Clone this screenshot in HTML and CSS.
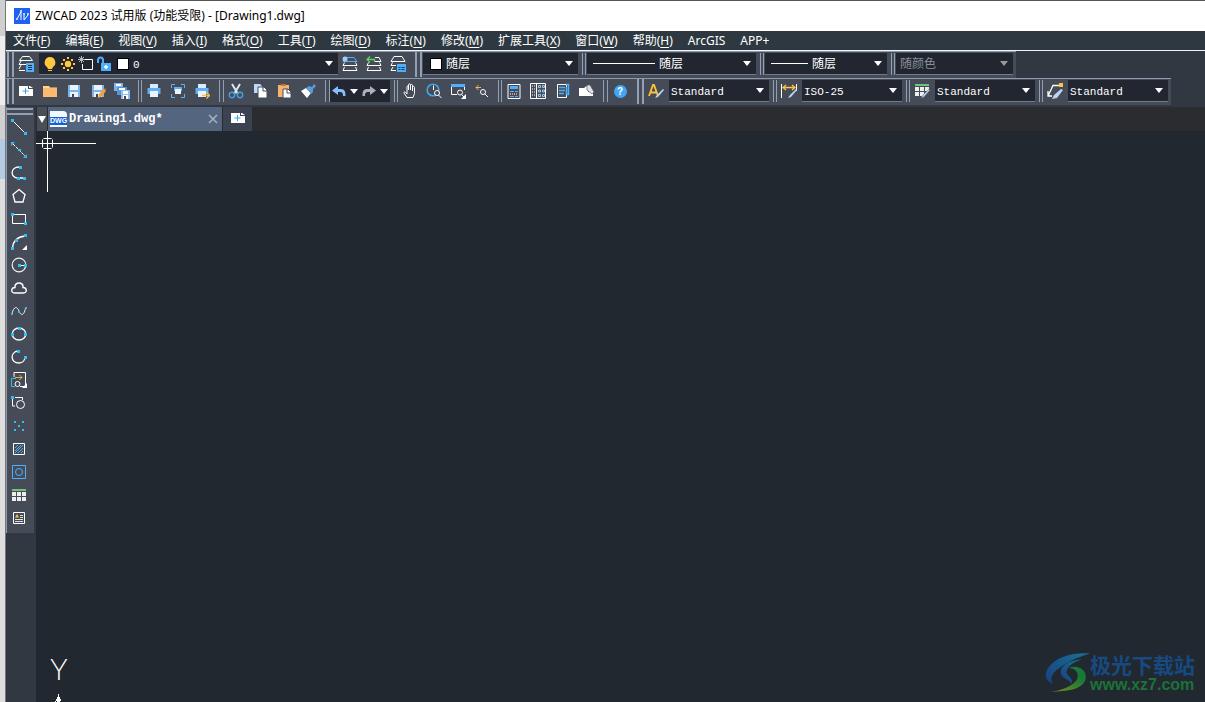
FILE: index.html
```html
<!DOCTYPE html>
<html lang="zh-CN">
<head>
<meta charset="utf-8">
<title>ZWCAD 2023</title>
<link rel="stylesheet" href="styles.css">
</head>
<body>
<svg class="sprite" aria-hidden="true">
  <symbol id="layers" viewBox="0 0 16 16"><path d="M4.500 .5h7l3 4h-13zM3 5l-2 3.500h7M3 9l-2 4M1 14.500h6" fill="none" stroke="#fff"/><path d="M8 7h8v9H8z" fill="#4cb0ff"/><path d="M10 9.500h4M10 11.500h4M10 13.500h4" stroke="#233"/></symbol>
  <symbol id="layer-current" viewBox="0 0 16 16"><path d="M4 1.500h8l3 4H1z" fill="none" stroke="#4cb0ff"/><path d="M2.500 6.500l-1.500 3h14l-1.500-3M2.500 11l-1.500 3.500h14L13.500 11" fill="none" stroke="#fff"/><circle cx="3" cy="3" r="2.500" fill="#a9c9ef"/></symbol>
  <symbol id="layer-prev" viewBox="0 0 16 16"><path d="M9 1.500h4l2 4H9M2.500 6.500l-1.500 3h14l-1.500-3M2.500 11l-1.500 3.500h14L13.500 11" fill="none" stroke="#fff"/><path d="M8.500 6V3.500H1M4 .5l-3 3 3 3" fill="none" stroke="#5fd06a" stroke-width="1.300"/></symbol>
  <symbol id="layer-state" viewBox="0 0 16 16"><path d="M4 .5h8l3 5H1zM2.500 6.500l-1.500 3h5M3 11l-2 3.500h5" fill="none" stroke="#fff"/><path d="M7 8h9v8H7z" fill="#4cb0ff"/><path d="M8.500 11.500h2M11.500 11.500h3M8.500 13.500h2M11.500 13.500h3" stroke="#234"/></symbol>
  <symbol id="bulb" viewBox="0 0 16 16"><path d="M8 1a5.500 5.500 0 0 0-3 10l1 2h4l1-2A5.500 5.500 0 0 0 8 1zM6 14h4v1H6z" fill="#ffc83d"/></symbol>
  <symbol id="sun" viewBox="0 0 16 16"><circle cx="8" cy="8" r="3.200" fill="#ffc83d"/><path d="M7 1h2v2H7zM7 13h2v2H7zM1 7h2v2H1zM13 7h2v2h-2zM3 3h2v2H3zM11 3h2v2h-2zM3 11h2v2H3zM11 11h2v2h-2z" fill="#ffc83d"/></symbol>
  <symbol id="freeze" viewBox="0 0 16 16"><path d="M7 3.500h7.500v10h-10V8" fill="none" stroke="#fff"/><path d="M3.500 0v7M0 3.500h7M1 1l5 5M6 1L1 6" stroke="#bbb"/></symbol>
  <symbol id="unlock" viewBox="0 0 16 16"><path d="M2 7V4a2.500 2.500 0 0 1 5 0v4" fill="none" stroke="#4cb0ff" stroke-width="2"/><path d="M5 7h10v8H5z" fill="#4cb0ff"/><path d="M10 9v4M8 11h4" stroke="#fff" stroke-width="1.500"/></symbol>
  <symbol id="new" viewBox="0 0 16 16"><path d="M1 3h9v3h5v7H1zM11 3h1l3 2h-4z" fill="#fff"/><path d="M7.500 5v6M4.500 8h6" stroke="#3fa3ec"/></symbol>
  <symbol id="open" viewBox="0 0 16 16"><path d="M1 3h6l1 1.500h7V7H1z" fill="#ffd984"/><path d="M1 5h14v9H1z" fill="#fbb972"/></symbol>
  <symbol id="save" viewBox="0 0 16 16"><path d="M2 2h12v12H2z" fill="#7eb4ea"/><path d="M4 2h8v5H4zM4 9h8v5H4z" fill="#e9f3fd"/><path d="M6 11h2v3H6z" fill="#37485d"/></symbol>
  <symbol id="saveas" viewBox="0 0 16 16"><use href="#save"/><path d="M8 15l1-4 5-5 2 2-5 6z" fill="#f4a52f"/><path d="M14 6l1-1 2 2-1 1z" fill="#f25d3b"/></symbol>
  <symbol id="saveall" viewBox="0 0 16 16"><path d="M0 0h9v8H0z" fill="#7eb4ea"/><path d="M2 1h5v2H2z" fill="#fff"/><path d="M3 4h10v8H3z" fill="#5795d4"/><path d="M5 5h6v2H5z" fill="#fff"/><path d="M7 7h9v9H7z" fill="#8dc0f2"/><path d="M9 8h5v3H9zM9 12h5v4H9z" fill="#fff"/><path d="M10 13h2v3h-2z" fill="#37485d"/></symbol>
  <symbol id="print" viewBox="0 0 16 16"><path d="M4 1h8v4H4z" fill="#d9ecff"/><path d="M1.500 5h13v6h-13z" fill="#64aef5"/><path d="M4 8h8v6H4z" fill="#eaf4ff"/></symbol>
  <symbol id="preview" viewBox="0 0 16 16"><path d="M1.500 5V1.500H5M11 1.500h3.500V5M14.500 11v3.500H11M5 14.500H1.500V11" fill="none" stroke="#64aef5"/><path d="M4 4h8v4H4z" fill="#64aef5"/><path d="M5 6h6v5H5z" fill="#eaf4ff"/></symbol>
  <symbol id="publish" viewBox="0 0 16 16"><use href="#print"/><path d="M8 12.500h7M12.500 9.500l3 3-3 3" fill="none" stroke="#f3c04b" stroke-width="1.300"/></symbol>
  <symbol id="cut" viewBox="0 0 16 16"><path d="M4 1l6 10M12 1L6 11" stroke="#dfe5ec" stroke-width="2"/><circle cx="4" cy="12" r="2.700" fill="none" stroke="#44a0e3" stroke-width="1.400"/><circle cx="12" cy="12" r="2.700" fill="none" stroke="#44a0e3" stroke-width="1.400"/></symbol>
  <symbol id="copy" viewBox="0 0 16 16"><path d="M2 1h6l2 2v7H2z" fill="#bdd9f6"/><path d="M6 4h6l3 3v8H6z" fill="#fff" stroke="#454c57"/><path d="M11 4v4h4" fill="none" stroke="#454c57"/></symbol>
  <symbol id="paste" viewBox="0 0 16 16"><path d="M2 2h11v12H2z" fill="#f7b46b"/><path d="M5 1h5v2H5z" fill="#b5793d"/><path d="M7 6h5l3 3v6H7z" fill="#fff" stroke="#454c57"/><path d="M11 6v4h4" fill="none" stroke="#454c57"/></symbol>
  <symbol id="brush" viewBox="0 0 16 16"><path d="M1 8l5-3 5 5-4 5z" fill="#fff"/><path d="M6 5l3-2 3 1 2-3 2 2-3 3v3l-2 2z" fill="#5a9bdd"/></symbol>
  <symbol id="undo" viewBox="0 0 16 16"><path d="M7 3v3h3c4 0 4.500 3 4.500 7h-2.500c0-3-.5-4-3-4H7v3L1 7.500z" fill="#86bdff"/></symbol>
  <symbol id="redo" viewBox="0 0 16 16"><path d="M9 3v3H6c-4 0-4.500 3-4.500 7H4c0-3 .5-4 3-4h2v3l6-4.500z" fill="#aeb2b8"/></symbol>
  <symbol id="pan" viewBox="0 0 16 16"><path d="M5 14.500L2 10c-.5-1 1-1.500 1.500-.5L5 11V4c0-1.500 1.500-1.500 1.500 0v3-5c0-1.500 2-1.500 2 0v5-4.500c0-1.500 2-1.500 2 0V8 4.500c0-1.500 2-1.500 2 0v6l-1.500 4z" fill="none" stroke="#fff"/></symbol>
  <symbol id="zoom-rt" viewBox="0 0 16 16"><circle cx="7" cy="7" r="5.800" fill="none" stroke="#44a5ee" stroke-width="1.600"/><path d="M7.500 2.500V7M12.500 12l3 3" stroke="#fff"/><circle cx="11" cy="10" r="2.500" fill="#454c57" stroke="#fff"/></symbol>
  <symbol id="zoom-win" viewBox="0 0 16 16"><path d="M1 1h14v3H1z" fill="#4cb0ff"/><path d="M1.500 4v7.500H7M14.500 4v3M12 12l2 2" fill="none" stroke="#fff"/><circle cx="10" cy="9.500" r="2.500" fill="none" stroke="#fff"/><path d="M16 11v5h-5z" fill="#fff"/></symbol>
  <symbol id="zoom-prev" viewBox="0 0 16 16"><path d="M2 4.500h5M4.500 2L2 4.500 4.500 7" fill="none" stroke="#efb954"/><circle cx="9" cy="9" r="2.500" fill="none" stroke="#fff"/><path d="M11 11l3 3" stroke="#fff"/></symbol>
  <symbol id="props" viewBox="0 0 16 16"><path d="M2 1.500h12v14H2z" fill="none" stroke="#fff"/><path d="M4 3h8v3H4z" fill="#4cb0ff"/><path d="M4 8.500h8M4 13.500h8" stroke="#4cb0ff" stroke-dasharray="4 1"/><path d="M4 11h8" stroke="#fff" stroke-dasharray="1 1"/></symbol>
  <symbol id="design" viewBox="0 0 16 16"><path d="M.5.5h15v15H.5zM6.500.5v15" fill="none" stroke="#fff"/><path d="M2 3h3M2 6h3M2 9h3M2 12h3" stroke="#fff" stroke-dasharray="1 1"/><path d="M8.500 2.500h2v2h-2zM12.500 2.500h2v2h-2zM8.500 7h2v2h-2zM12.500 7h2v2h-2zM8.500 11.500h2v2h-2zM12.500 11.500h2v2h-2z" fill="none" stroke="#9fc8ee"/></symbol>
  <symbol id="palette" viewBox="0 0 16 16"><path d="M3.500 1.500h9v13h-9z" fill="none" stroke="#fff"/><path d="M5 4.500h6M5 7.500h6M5 10.500h5M12 1.500h2.500v10h-2V4" stroke="#4cb0ff" stroke-width="1.500" fill="none"/></symbol>
  <symbol id="markup" viewBox="0 0 16 16"><path d="M1 5h5l4-3v7h5v4H1z" fill="#fff"/><path d="M9 2h3l4 7-2 2-5-4z" fill="#dfe3e8" stroke="#565e69" stroke-width=".7"/></symbol>
  <symbol id="textstyle" viewBox="0 0 16 16"><path d="M1 13L5 2h1l4 11M3 9.500h5" fill="none" stroke="#ffc43a" stroke-width="1.800"/><path d="M7 15l2-3 6-6 1 1-6 7z" fill="#b9d5f2"/></symbol>
  <symbol id="dimstyle" viewBox="0 0 16 16"><path d="M.5 1v14M15.500 1v7" stroke="#fff"/><path d="M2 4.500h12M5 2L2 4.500 5 7M11 2l3 2.500L11 7" fill="none" stroke="#ffc43a" stroke-width="1.300"/><path d="M7 15l2-3 6-6 1 1-6 7z" fill="#b9d5f2"/></symbol>
  <symbol id="tablestyle" viewBox="0 0 16 16"><path d="M1 1h14v2H1z" fill="#73c27c"/><path d="M1 4h4v4H1zM6 4h4v4H6zM11 4h4v4h-4zM1 9h4v4H1zM6 9h4v4H6z" fill="#eee"/><path d="M7 15l2-3 6-6 1 1-6 7z" fill="#b9d5f2" stroke="#5c6878" stroke-width=".5"/></symbol>
  <symbol id="leaderstyle" viewBox="0 0 16 16"><path d="M12 2.500H6L1.500 12M1 8v5h4" fill="none" stroke="#fff" stroke-width="1.300"/><path d="M12 0h4v4h-4z" fill="#ffc43a"/><path d="M5 16l2-4 7-6 2 1-6 8z" fill="#b9d5f2"/></symbol>
  <symbol id="line" viewBox="0 0 16 16"><path d="M2 2l12 12" stroke="#fff"/><path d="M0 0h3v3H0zM13 13h3v3h-3z" fill="#33bdf7"/></symbol>
  <symbol id="xline" viewBox="0 0 16 16"><path d="M2 2l12 12" stroke="#fff" stroke-dasharray="3 1"/><path d="M0 0h4L0 4zM16 16h-4l4-4zM7 7h3v2H7z" fill="#33bdf7"/></symbol>
  <symbol id="pline" viewBox="0 0 16 16"><path d="M8 2C-1 2-1 13 7 13h6" fill="none" stroke="#fff" stroke-width="1.300"/><path d="M8 1h3v3H8zM6 12h3v3H6zM12 12h3v3h-3z" fill="#33bdf7"/></symbol>
  <symbol id="polygon" viewBox="0 0 16 16"><path d="M8 1.500l6 5L12 14H4L2 6.500z" fill="none" stroke="#fff" stroke-width="1.300"/></symbol>
  <symbol id="rect" viewBox="0 0 16 16"><path d="M1.500 3.500h13v9h-13z" fill="none" stroke="#fff"/><path d="M0 2h3v3H0zM13 11h3v3h-3z" fill="#33bdf7"/></symbol>
  <symbol id="arc" viewBox="0 0 16 16"><path d="M1.500 14C2 7 6 3 14 2" fill="none" stroke="#fff" stroke-width="1.300"/><path d="M0 13h3v3H0zM4 5h3v3H4zM13 0h3v3h-3z" fill="#33bdf7"/><path d="M16 11v5h-5z" fill="#fff"/></symbol>
  <symbol id="circle" viewBox="0 0 16 16"><circle cx="8" cy="8" r="6.800" fill="none" stroke="#eee" stroke-width="1.200"/><path d="M8 8.500h7" stroke="#fff"/><path d="M7 7h3v3H7zM13 7h3v3h-3z" fill="#33bdf7"/></symbol>
  <symbol id="cloud" viewBox="0 0 16 16"><path d="M3.500 13C-.5 13 0 7.500 4 7.500 3 1.500 13 1.500 12 7.500c4 0 4.500 5.500.5 5.500z" fill="none" stroke="#fff" stroke-width="1.400"/></symbol>
  <symbol id="spline" viewBox="0 0 16 16"><path d="M1 10.500C3 3 6 3 8 8s5 5 6.500-3" fill="none" stroke="#eee"/><path d="M0 10h2v2H0zM7 8h2v2H7zM14 4h2v2h-2z" fill="#33bdf7"/></symbol>
  <symbol id="ellipse" viewBox="0 0 16 16"><ellipse cx="8" cy="8" rx="6.800" ry="6" fill="none" stroke="#fff" stroke-width="1.300"/><path d="M7 1h3v3H7zM0 7h3v3H0zM13 7h3v3h-3z" fill="#33bdf7"/></symbol>
  <symbol id="ellarc" viewBox="0 0 16 16"><path d="M7 2C-1 3-1 14 8 14c4 0 6-3 6-6" fill="none" stroke="#fff" stroke-width="1.300"/><path d="M6 1h3v3H6zM13 7h3v3h-3z" fill="#33bdf7"/></symbol>
  <symbol id="insert" viewBox="0 0 16 16"><path d="M3 5V.5h11.500v14H9" fill="none" stroke="#fff"/><path d="M5 6.500H.5v8H4" fill="none" stroke="#33bdf7"/><path d="M4 5.500h7M8.500 3L11 5.500 8.500 8" fill="none" stroke="#efaf3e"/><circle cx="6.500" cy="12" r="2.500" fill="none" stroke="#fff"/><path d="M16 11v5h-5z" fill="#fff"/></symbol>
  <symbol id="block" viewBox="0 0 16 16"><path d="M1.500 3v8H4M4 2.500h7.500V5" fill="none" stroke="#fff"/><path d="M0 1h3v3H0z" fill="#33bdf7"/><circle cx="9.500" cy="9.500" r="4" fill="none" stroke="#fff"/></symbol>
  <symbol id="points" viewBox="0 0 16 16"><path d="M3 3h2v2H3zM11 3h2v2h-2zM7 7h2v2H7zM3 11h2v2H3zM11 11h2v2h-2z" fill="#33bdf7"/></symbol>
  <symbol id="hatch" viewBox="0 0 16 16"><path d="M2.500 2.500h11v11h-11z" fill="none" stroke="#fff"/><path d="M4 7l3-3M4 10l6-6M4 12l8-8M7 12l5-5M10 12l2-2" stroke="#4cb0ff"/></symbol>
  <symbol id="region" viewBox="0 0 16 16"><path d="M1.500 1.500h13v13h-13z" fill="none" stroke="#4cb0ff"/><circle cx="8" cy="8" r="3.500" fill="none" stroke="#4cb0ff"/></symbol>
  <symbol id="table" viewBox="0 0 16 16"><path d="M1 2h14v2H1z" fill="#73c27c"/><path d="M1 5h4v4H1zM6 5h4v4H6zM11 5h4v4h-4zM1 10h4v4H1zM6 10h4v4H6zM11 10h4v4h-4z" fill="#eee"/></symbol>
  <symbol id="mtext" viewBox="0 0 16 16"><path d="M2.500 2.500h11v11h-11z" fill="none" stroke="#fff"/><path d="M4 7.500L6 4l2 3.500z" fill="#ffc43a"/><path d="M9 5.500h3M9 7.500h3M4 9.500h8M4 11.500h8" stroke="#ddd"/></symbol>
</svg>

<div class="desktop">
  <div class="behind"><i class="behind-title"></i><i class="behind-bar"></i><i class="behind-row"></i><i class="behind-selected"></i></div>
  <div class="window">
    <header class="titlebar">
      <svg class="logo" viewBox="0 0 16 16" aria-hidden="true"><path d="M0 0h16v16H0z" fill="#1f61f0"/><path d="M3 11L7 4v8M10 6v6l4-5" fill="none" stroke="#fff"/><path d="M2 10h2v2H2zM6 2h2v2H6zM9 5h2v2H9zM13 5h2v2h-2z" fill="#b9d1ff"/></svg>
      <h1>ZWCAD 2023 试用版 (功能受限) - [Drawing1.dwg]</h1>
    </header>
    <nav class="menubar">
      <button>文件(<u>F</u>)</button><button>编辑(<u>E</u>)</button><button>视图(<u>V</u>)</button><button>插入(<u>I</u>)</button><button>格式(<u>O</u>)</button><button>工具(<u>T</u>)</button><button>绘图(<u>D</u>)</button><button>标注(<u>N</u>)</button><button>修改(<u>M</u>)</button><button>扩展工具(<u>X</u>)</button><button>窗口(<u>W</u>)</button><button>帮助(<u>H</u>)</button><button>ArcGIS</button><button>APP+</button>
    </nav>
    <div class="toolbars">
      <div class="toolbar">
        <span class="grip grip-first"></span>
        <button class="tool" aria-label="图层特性"><svg><use href="#layers"/></svg></button>
        <div class="combo combo-layer">
          <svg><use href="#bulb"/></svg><svg><use href="#sun"/></svg><svg><use href="#freeze"/></svg><svg><use href="#unlock"/></svg>
          <span class="swatch"></span><select class="latin" aria-label="图层"><option>0</option></select>
        </div>
        <button class="tool" aria-label="置为当前"><svg><use href="#layer-current"/></svg></button>
        <button class="tool" aria-label="上一个图层"><svg><use href="#layer-prev"/></svg></button>
        <button class="tool" aria-label="图层状态"><svg><use href="#layer-state"/></svg></button>
        <span class="grip grip-heavy"></span>
        <div class="combo combo-color"><span class="swatch"></span><select aria-label="颜色"><option>随层</option></select></div>
        <span class="grip"></span>
        <div class="combo combo-linetype"><span class="stroke"></span><select aria-label="线型"><option>随层</option></select></div>
        <span class="grip"></span>
        <div class="combo combo-weight"><span class="stroke stroke-short"></span><select aria-label="线宽"><option>随层</option></select></div>
        <span class="grip"></span>
        <div class="combo combo-plot"><select aria-label="打印样式" disabled><option>随颜色</option></select></div>
      </div>
      <div class="toolbar">
        <span class="grip grip-first"></span>
        <button class="tool" aria-label="新建"><svg><use href="#new"/></svg></button>
        <button class="tool" aria-label="打开"><svg><use href="#open"/></svg></button>
        <button class="tool" aria-label="保存"><svg><use href="#save"/></svg></button>
        <button class="tool" aria-label="另存为"><svg><use href="#saveas"/></svg></button>
        <button class="tool" aria-label="全部保存"><svg><use href="#saveall"/></svg></button>
        <span class="grip"></span>
        <button class="tool" aria-label="打印"><svg><use href="#print"/></svg></button>
        <button class="tool" aria-label="打印预览"><svg><use href="#preview"/></svg></button>
        <button class="tool" aria-label="发布"><svg><use href="#publish"/></svg></button>
        <span class="grip grip-wide"></span>
        <button class="tool" aria-label="剪切"><svg><use href="#cut"/></svg></button>
        <button class="tool" aria-label="复制"><svg><use href="#copy"/></svg></button>
        <button class="tool" aria-label="粘贴"><svg><use href="#paste"/></svg></button>
        <button class="tool" aria-label="特性匹配"><svg><use href="#brush"/></svg></button>
        <span class="grip grip-wide"></span>
        <div class="history">
          <button aria-label="放弃"><svg><use href="#undo"/></svg></button><button class="more" aria-label="放弃列表"></button>
          <button aria-label="重做"><svg><use href="#redo"/></svg></button><button class="more" aria-label="重做列表"></button>
        </div>
        <span class="grip"></span>
        <button class="tool" aria-label="平移"><svg><use href="#pan"/></svg></button>
        <button class="tool" aria-label="实时缩放"><svg><use href="#zoom-rt"/></svg></button>
        <button class="tool" aria-label="窗口缩放"><svg><use href="#zoom-win"/></svg></button>
        <button class="tool" aria-label="缩放上一个"><svg><use href="#zoom-prev"/></svg></button>
        <span class="grip"></span>
        <button class="tool" aria-label="特性"><svg><use href="#props"/></svg></button>
        <button class="tool" aria-label="设计中心"><svg><use href="#design"/></svg></button>
        <button class="tool" aria-label="工具选项板"><svg><use href="#palette"/></svg></button>
        <button class="tool" aria-label="标记"><svg><use href="#markup"/></svg></button>
        <span class="grip grip-wide"></span>
        <button class="tool tool-help" aria-label="帮助"><span>?</span></button>
        <span class="grip grip-heavy"></span>
        <button class="tool" aria-label="文字样式管理"><svg><use href="#textstyle"/></svg></button>
        <div class="combo combo-style"><select class="latin" aria-label="文字样式"><option>Standard</option></select></div>
        <span class="grip"></span>
        <button class="tool" aria-label="标注样式管理"><svg><use href="#dimstyle"/></svg></button>
        <div class="combo combo-style"><select class="latin" aria-label="标注样式"><option>ISO-25</option></select></div>
        <span class="grip"></span>
        <button class="tool" aria-label="表格样式管理"><svg><use href="#tablestyle"/></svg></button>
        <div class="combo combo-style"><select class="latin" aria-label="表格样式"><option>Standard</option></select></div>
        <span class="grip"></span>
        <button class="tool" aria-label="引线样式管理"><svg><use href="#leaderstyle"/></svg></button>
        <div class="combo combo-style"><select class="latin" aria-label="引线样式"><option>Standard</option></select></div>
      </div>
    </div>
    <div class="workspace">
      <aside class="dock">
        <div class="palette">
          <span class="palette-grip"></span>
          <button aria-label="直线"><svg><use href="#line"/></svg></button>
          <button aria-label="构造线"><svg><use href="#xline"/></svg></button>
          <button aria-label="多段线"><svg><use href="#pline"/></svg></button>
          <button aria-label="正多边形"><svg><use href="#polygon"/></svg></button>
          <button aria-label="矩形"><svg><use href="#rect"/></svg></button>
          <button aria-label="圆弧"><svg><use href="#arc"/></svg></button>
          <button aria-label="圆"><svg><use href="#circle"/></svg></button>
          <button aria-label="修订云线"><svg><use href="#cloud"/></svg></button>
          <button aria-label="样条曲线"><svg><use href="#spline"/></svg></button>
          <button aria-label="椭圆"><svg><use href="#ellipse"/></svg></button>
          <button aria-label="椭圆弧"><svg><use href="#ellarc"/></svg></button>
          <button aria-label="插入块"><svg><use href="#insert"/></svg></button>
          <button aria-label="创建块"><svg><use href="#block"/></svg></button>
          <button aria-label="点"><svg><use href="#points"/></svg></button>
          <button aria-label="填充"><svg><use href="#hatch"/></svg></button>
          <button aria-label="面域"><svg><use href="#region"/></svg></button>
          <button aria-label="表格"><svg><use href="#table"/></svg></button>
          <button aria-label="多行文字"><svg><use href="#mtext"/></svg></button>
        </div>
      </aside>
      <main class="document">
        <div class="tabs">
          <button class="tab-list" aria-label="图纸列表"></button>
          <div class="tab">
            <button class="tab-name"><span class="dwg">DWG</span>Drawing1.dwg*</button>
            <button class="tab-close" aria-label="关闭"><svg viewBox="0 0 10 10"><path d="M1 1l8 8M9 1L1 9" stroke="#a9b2be" stroke-width="1.500"/></svg></button>
          </div>
          <button class="tab-new" aria-label="新建图纸"><svg><use href="#new"/></svg></button>
        </div>
        <div class="canvas">
          <svg class="crosshair" viewBox="0 0 60 61" aria-hidden="true"><path d="M0 12.500h60M11.500 0v61M7.500 7.500h8M7.500 17.500h8M6.500 8.500v8M16.500 8.500v8" fill="none" stroke="#fff"/></svg>
          <div class="ucs"><span>Y</span><svg viewBox="0 0 8 8" aria-hidden="true"><path d="M3.500 0v8M2.500 3v5M4.500 3v5M.5 7v1M1.500 5v2M5.500 5v2" stroke="#fff"/></svg></div>
          <div class="watermark">
            <svg viewBox="0 0 46 42" aria-hidden="true">
              <defs><linearGradient id="wb" x1="0" y1="1" x2="1" y2="0"><stop offset="0" stop-color="#183f82"/><stop offset="1" stop-color="#187291"/></linearGradient><linearGradient id="wg" x1="0" y1="1" x2="1" y2="0"><stop offset="0" stop-color="#838c20"/><stop offset=".7" stop-color="#187a35"/></linearGradient></defs>
              <path d="M46 1C24-1 4 8 1 21c-1 6 2 9 7 11-3-5-1-10 4-14C20 11 30 6 46 1z" fill="url(#wb)"/>
              <path d="M38 7c-16 1-23 8-22 14 1 6 9 6 11 11 3-6-6-8-5-13 1-4 6-9 16-12z" fill="url(#wb)"/>
              <path d="M24 16c7-3 14-1 17 5 3 8-3 15-14 17-8 2-17 1-23 3 13-2 26-7 29-14 2-6-2-11-9-11z" fill="url(#wg)"/>
            </svg>
            <div class="watermark-text"><b>极光下载站</b><span>www.xz7.com</span></div>
          </div>
        </div>
      </main>
    </div>
  </div>
</div>
</body>
</html>
```
FILE: styles.css
```css
* { box-sizing: border-box; }
body {
  margin: 0;
  color: #fff;
  font: 12px/16px "Noto Sans", "Noto Sans CJK SC", sans-serif;
}
button, select {
  margin: 0;
  padding: 0;
  border: 0;
  border-radius: 0;
  background: none;
  color: inherit;
  font: inherit;
}
svg { display: block; width: 16px; height: 16px; flex: none; overflow: visible; }
.sprite { position: absolute; width: 0; height: 0; overflow: hidden; }

.desktop { display: flex; height: 100vh; overflow: hidden; }
.behind {
  display: flex;
  flex-direction: column;
  flex: none;
  width: 6px;
  border-right: 1px solid #777;
  background: #dedede;
}
.behind-title { height: 36px; background: #cfcfcf; }
.behind-bar { height: 69px; background: #ededed; }
.behind-row { height: 34px; background: #d0d0d0; }
.behind-selected { height: 40px; background: #b4cbe4; }
.window { display: flex; flex-direction: column; flex: 1; min-width: 0; background: #323842; }

.titlebar {
  display: flex;
  align-items: center;
  gap: 5px;
  flex: none;
  height: 31px;
  padding-left: 8px;
  border-top: 1px solid #555;
  background: #fff;
  color: #000;
}
.titlebar h1 { margin: 0; font-size: 12px; font-weight: 400; white-space: nowrap; }

.menubar {
  display: flex;
  gap: 15px;
  flex: none;
  height: 20px;
  padding-left: 7px;
  border-bottom: 1px solid #f3f3f3;
  background: #2e3840;
  white-space: nowrap;
}
.menubar u { text-underline-offset: 2px; }

.toolbars { display: flex; flex-direction: column; align-items: flex-start; flex: none; padding-bottom: 2px; }
.toolbar {
  display: flex;
  padding: 1px 3px 3px 0;
  border-top: 1px solid #8b9aae;
  background: #454c57;
}
.grip { display: flex; flex: none; width: 8px; padding: 0 0 0 4px; }
.grip::before {
  content: "";
  width: 4px;
  border: solid #91a0b5;
  border-width: 0 1px;
}
.toolbar .grip.grip-first { padding-left: 1px; margin: -1px 0 -2px; }
.toolbar .grip.grip-wide { width: 10px; padding-left: 5px; }
.toolbar .grip.grip-heavy { width: 12px; padding-left: 5px; margin: -1px 0 -2px; }
.grip-first::before, .grip-heavy::before { width: 6px; border-width: 0 2px; }
.tool { display: flex; align-items: center; justify-content: center; flex: none; width: 24px; height: 22px; }
.tool-help span {
  width: 13px;
  height: 13px;
  border-radius: 50%;
  background: #42a5f5;
  font: bold 10px/13px "Liberation Sans", sans-serif;
}

.combo {
  display: flex;
  align-items: center;
  position: relative;
  height: 22px;
  margin-left: 1px;
  border-bottom: 1px solid #747b86;
  background: #212630;
}
.combo::after, .more::before, .tab-list::before {
  content: "";
  border: solid transparent;
  border-width: 5px 4px 0;
  border-top-color: #fff;
}
.combo::after { position: absolute; right: 5px; pointer-events: none; }
.combo:has(:disabled)::after { border-top-color: #999; }
.combo select { appearance: none; flex: 1; min-width: 0; height: 20px; padding-left: 4px; outline: 0; }
.combo select:disabled { color: #8b919a; opacity: 1; }
.combo .latin { font: 11px/16px "Liberation Mono", monospace; padding: 2px 0 0 2px; }
.swatch { flex: none; width: 12px; height: 12px; border: 1px solid #000; background: #fff; }
.stroke { flex: none; width: 62px; height: 1px; background: #fff; }
.stroke-short { width: 37px; }
.combo-layer { width: 299px; padding-left: 3px; }
.combo-layer svg { margin-right: 2px; }
.combo-layer .swatch { margin: 0 2px 0 3px; }
.combo-color { width: 155px; padding-left: 7px; }
.combo-linetype { width: 169px; padding-left: 6px; }
.combo-weight { width: 122px; padding-left: 6px; }
.combo-plot { width: 117px; }
.combo-style { width: 100px; }

.history { display: flex; align-items: center; gap: 1px; width: 60px; height: 22px; padding-left: 1px; background: #212630; }
.more { display: flex; width: 12px; height: 20px; align-items: center; justify-content: center; }

.workspace { display: flex; flex: 1; min-height: 0; }
.dock { flex: none; width: 30px; }
.palette {
  display: flex;
  flex-direction: column;
  width: 28px;
  padding-bottom: 4px;
  border-left: 1px solid #8b9aae;
  background: #454c57;
}
.palette-grip { height: 7px; margin: 1px 1px 0 0; border: solid #91a0b5; border-width: 2px 0; }
.palette button { display: grid; place-items: center; width: 24px; height: 23px; }
.document { display: flex; flex-direction: column; flex: 1; min-width: 0; }
.tabs { display: flex; gap: 1px; flex: none; height: 24px; padding-left: 1px; background: #2a2c30; }
.tab-list { display: flex; align-items: center; justify-content: center; width: 10px; background: #475059; }
.tab-list::before { border-width: 7px 4px 0; }
.tab { display: flex; align-items: center; width: 174px; padding: 0 4px 0 2px; background: #53657f; }
.tab-name {
  display: flex;
  align-items: center;
  gap: 2px;
  flex: 1;
  font: bold 12px/16px "Liberation Mono", monospace;
  white-space: nowrap;
}
.dwg {
  width: 17px;
  height: 16px;
  padding-top: 6px;
  border-radius: 0 4px 0 0;
  background: linear-gradient(#f2f8ff 6px, #1262d8 6px 14px, #f2f8ff 14px);
  font: bold 7px/8px "Liberation Sans", sans-serif;
  text-align: center;
}
.tab-close svg { width: 10px; height: 10px; }
.tab-new { display: flex; justify-content: center; padding-top: 3px; width: 29px; background: #3b4350; }

.canvas { position: relative; flex: 1; overflow: hidden; background: #212830; }
.crosshair { position: absolute; top: 0; left: 0; width: 60px; height: 61px; }
.ucs {
  position: absolute;
  bottom: 0;
  left: 14px;
  display: flex;
  flex-direction: column;
  align-items: center;
  width: 18px;
  gap: 13px;
  font: 300 29px/24px Lato, sans-serif;
}
.ucs svg { width: 8px; height: 8px; }
.watermark { position: absolute; right: 10px; bottom: 8px; display: flex; }
.watermark svg { width: 45px; height: 42px; }
.watermark-text { display: flex; flex-direction: column; color: #1d7139; font: bold 16px/18px "Liberation Sans", sans-serif; }
.watermark-text b { color: #174a82; font: bold 21px/24px "Noto Sans CJK SC", sans-serif; }
```
